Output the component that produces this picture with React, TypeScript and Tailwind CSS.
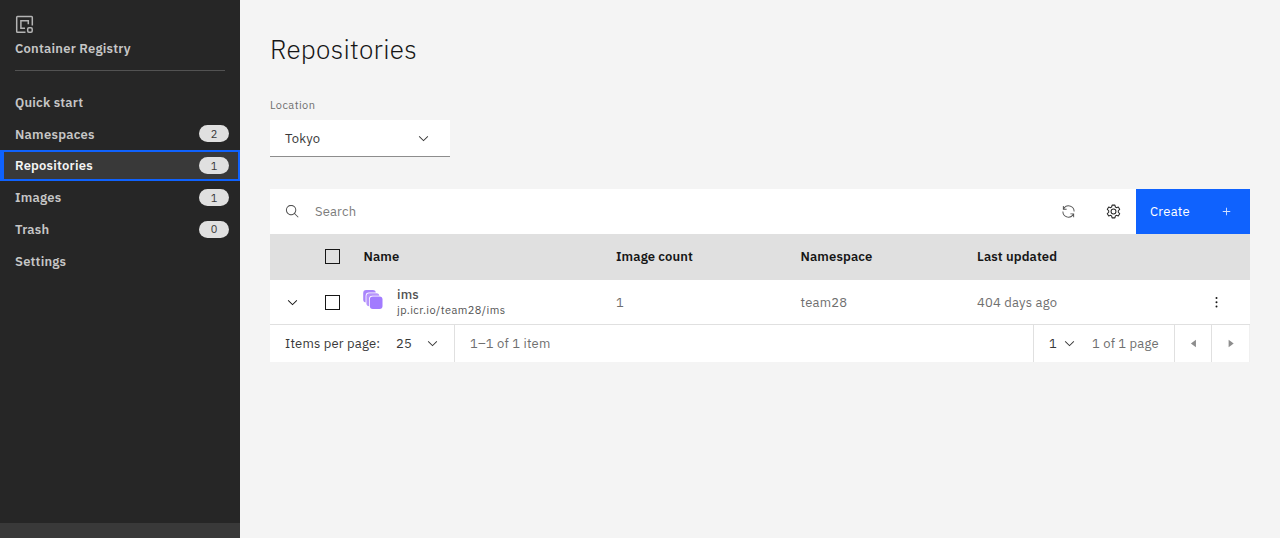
import React from "react";

type IconProps = { d: string; size?: number; box?: number; className?: string };

function Icon({ d, size = 15, box = 16, className = "" }: IconProps) {
  return (
    <svg width={size} height={size} viewBox={`0 0 ${box} ${box}`} fill="currentColor" className={`shrink-0 ${className}`}>
      <path fillRule="evenodd" d={d} />
    </svg>
  );
}

const CHEVRON = "M8 11L3 6 3.7 5.3 8 9.6 12.3 5.3 13 6z";
const SEARCH =
  "M29 27.586l-7.552-7.552a11.018 11.018 0 1 0-1.414 1.414L27.586 29ZM4 13a9 9 0 1 1 9 9A9.01 9.01 0 0 1 4 13Z";
const ADD = "M17 15V8h-2v7H8v2h7v7h2v-7h7v-2z";
const RENEW =
  "M12 10H6.78A11 11 0 0 1 27 16h2A13 13 0 0 0 6 7.68V4H4v8h8zM20 22h5.22A11 11 0 0 1 5 16H3a13 13 0 0 0 23 8.32V28h2v-8h-8z";

function Gear() {
  return (
    <svg width="15" height="15" viewBox="0 0 16 16" fill="none" stroke="#262626" strokeWidth="1.1" strokeLinejoin="round" className="shrink-0">
      <path d="M6 3.2L6.5 1.2h3l.5 2 1.1.7 2-.6 1.5 2.4-1.5 1.5v1.6l1.5 1.5-1.5 2.4-2-.6-1.1.7-.5 2h-3l-.5-2-1.1-.7-2 .6-1.5-2.4 1.5-1.5V7.2L1.4 5.7l1.5-2.4 2 .6z" />
      <circle cx="8" cy="8" r="2.6" />
    </svg>
  );
}

function RegistryIcon() {
  return (
    <svg width="20" height="20" viewBox="0 0 20 20" fill="none" stroke="#b4b4b4" strokeWidth="1.5" className="block">
      <path d="M10.5 17.2H2.5a.8.8 0 0 1-.8-.8V2.4a.8.8 0 0 1 .8-.8h14a.8.8 0 0 1 .8.8v8" />
      <path d="M10 13.2H5.9V5.7h7.4v3.6" />
      <rect x="12.7" y="12.7" width="4.5" height="4.5" rx="1.2" />
    </svg>
  );
}

function RepoIcon() {
  return (
    <svg width="20" height="20" viewBox="0 0 20 20" className="mt-[3px] -ml-px shrink-0">
      <rect x="0.2" y="0" width="12.6" height="12.6" rx="3" fill="#a985fb" />
      <rect x="2.6" y="2.4" width="14" height="14" rx="3.4" fill="#fff" />
      <rect x="3.4" y="3.2" width="13" height="13" rx="3" fill="#b794fc" />
      <rect x="6" y="5.8" width="14" height="14" rx="3.4" fill="#fff" />
      <rect x="6.8" y="6.4" width="12.7" height="12.7" rx="3" fill="#a27bff" />
    </svg>
  );
}

const NAV = [
  { label: "Quick start", tracking: "tracking-[0.2px]" },
  { label: "Namespaces", count: 2, tracking: "tracking-[0.25px]" },
  { label: "Repositories", count: 1, active: true, tracking: "tracking-[0.2px]" },
  { label: "Images", count: 1, tracking: "tracking-[0.25px]" },
  { label: "Trash", count: 0, tracking: "tracking-[0.2px]" },
  { label: "Settings", tracking: "tracking-[0.2px]" },
];

function Sidebar() {
  return (
    <aside className="flex w-60 shrink-0 flex-col bg-[#262626] text-[#c6c6c6]">
      <div className="mx-[15px] h-[71px] border-b border-[#525252] pt-[15px]">
        <RegistryIcon />
        <div className="mt-[3.5px] text-[13px] leading-5 font-semibold tracking-[0.22px] whitespace-nowrap">Container Registry</div>
      </div>
      <nav className="mt-[15px] flex-1">
        {NAV.map((item) => (
          <div
            key={item.label}
            className={`flex h-[31.8px] items-center justify-between border-2 pr-[9px] pl-[13px] text-[13px] font-semibold ${
              item.active ? "border-[#0f62fe] bg-[#393939] text-[#f4f4f4] shadow-[inset_2px_0_0_#0f62fe]" : "border-transparent"
            }`}
          >
            <span className={`pt-[1.5px] ${item.tracking}`}>{item.label}</span>
            {item.count !== undefined && (
              <span className="flex h-[17px] w-[30px] items-center justify-center rounded-full bg-[#e0e0e0] pt-px text-[11px] font-normal text-[#393939]">
                {item.count}
              </span>
            )}
          </div>
        ))}
      </nav>
      <div className="h-[15px] bg-[#393939]" />
    </aside>
  );
}

function Checkbox() {
  return <span className="block size-[15.5px] border border-[#161616]" />;
}

const COLS = "grid grid-cols-[54.5px_39px_252.5px_184.5px_176.5px_231.5px_41.5px] items-center";

export default function App() {
  return (
    <div className="flex h-[538px] w-[1280px] overflow-hidden bg-[#f4f4f4] font-['IBM_Plex_Sans','Roboto',sans-serif] text-[13px] text-[#161616]">
      <Sidebar />
      <main className="flex-1 pt-[31px] pr-[30px] pl-[30px]">
        <h1 className="h-[34px] pt-px text-[26px] leading-[34px] font-light tracking-[0.3px]">Repositories</h1>
        <div className="mt-[33px] h-[15px] text-[11px] leading-[15px] tracking-[0.42px] text-[#6f6f6f]">Location</div>
        <div className="mt-[7px] flex h-[37px] w-[180px] items-center justify-between border-b border-[#8d8d8d] bg-white pt-px pr-[19px] pl-[15px] tracking-[0.15px] text-[#393939]">
          Tokyo
          <Icon d={CHEVRON} />
        </div>

        <section className="mt-[32px]">
          <div className="flex h-[45px] items-center bg-white pl-[15px]">
            <Icon d={SEARCH} box={32} className="text-[#525252]" />
            <span className="ml-[15px] flex-1 pt-px tracking-[0.15px] text-[#7c7c7c]">Search</span>
            <Icon d={RENEW} box={32} className="mr-[30px] text-[#525252]" />
            <Gear />
            <button className="ml-[15px] flex h-[45px] w-[114.5px] items-center justify-between bg-[#0f62fe] pr-[16px] pl-[14.5px] tracking-[0.25px] text-white">
              Create
              <Icon d={ADD} box={32} className="text-[#d0e0ff]" />
            </button>
          </div>

          <div className={`${COLS} h-[46px] bg-[#e0e0e0] pb-px font-semibold tracking-[0.12px]`}>
            <span />
            <Checkbox />
            <span>Name</span>
            <span>Image count</span>
            <span>Namespace</span>
            <span>Last updated</span>
            <span />
          </div>

          <div className={`${COLS} h-[45px] border-b border-[#e0e0e0] bg-white pt-px tracking-[0.2px] text-[#6f6f6f]`}>
            <Icon d={CHEVRON} className="ml-[15px] text-[#161616]" />
            <Checkbox />
            <span className="flex items-start">
              <RepoIcon />
              <span className="ml-[14.5px] block">
                <span className="block leading-[16px] font-medium text-[#525252]">ims</span>
                <span className="block text-[11px] leading-[15px] tracking-[0.43px] text-[#525252]">jp.icr.io/team28/ims</span>
              </span>
            </span>
            <span>1</span>
            <span>team28</span>
            <span>404 days ago</span>
            <svg width="15" height="15" viewBox="0 0 15 15" fill="#161616">
              <circle cx="7.5" cy="3" r="1" />
              <circle cx="7.5" cy="7.3" r="1" />
              <circle cx="7.5" cy="11.6" r="1" />
            </svg>
          </div>

          <div className="flex h-[37px] items-stretch bg-white tracking-[0.2px] text-[#393939]">
            <div className="flex w-[185px] items-center border-r border-[#e0e0e0] pl-[15px]">
              <span className="w-[111px]">Items per page:</span>
              <span className="w-[29px]">25</span>
              <Icon d={CHEVRON} />
            </div>
            <div className="flex flex-1 items-center pl-[15px] text-[#6f6f6f]">1–1 of 1 item</div>
            <div className="flex w-[142px] items-center border-x border-[#e0e0e0] pl-[15px]">
              <span className="w-[13px]">1</span>
              <Icon d={CHEVRON} />
              <span className="ml-[15px] whitespace-nowrap text-[#6f6f6f]">1 of 1 page</span>
            </div>
            <div className="flex w-[37px] items-center justify-center border-r border-[#e0e0e0]">
              <Icon d="M10.6 4v8L5.2 8z" className="text-[#8d8d8d]" />
            </div>
            <div className="flex w-[38px] items-center justify-center border-r border-[#f0f0f0]">
              <Icon d="M6 12V4l5.4 4z" className="text-[#8d8d8d]" />
            </div>
          </div>
        </section>
      </main>
    </div>
  );
}
